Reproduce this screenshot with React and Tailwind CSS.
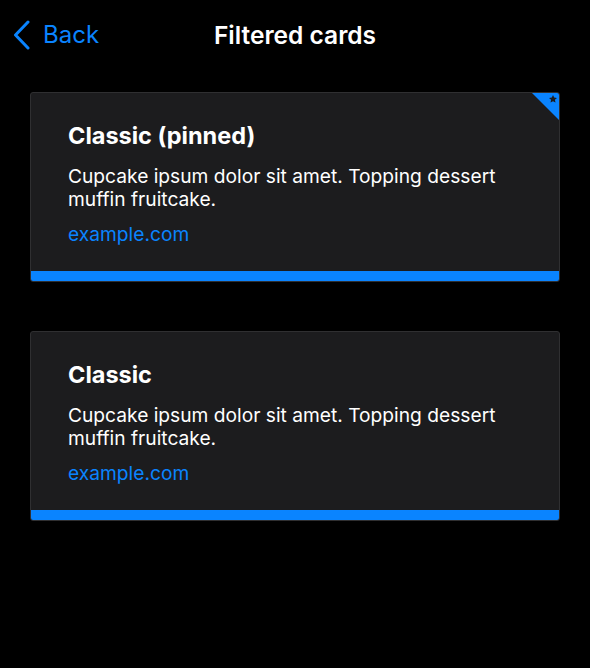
import React from 'react';

const cards = [
  { title: 'Classic (pinned)', pinned: true },
  { title: 'Classic', pinned: false },
];

const Card = ({ title, pinned }) => (
  <div className="relative flex h-[190px] flex-col overflow-hidden rounded-[3px] border border-[#2f2f31] bg-[#1c1c1e] shadow-[0_2px_8px_rgba(0,0,0,0.6)]">
    {pinned && (
      <div className="absolute right-0 top-0 h-[27px] w-[27px]">
        <svg viewBox="0 0 27 27" className="h-full w-full">
          <polygon points="0,0 27,0 27,27" fill="#0a84ff" />
          <polygon
            points="21,2 22.2,4.6 25,4.9 22.9,6.8 23.5,9.6 21,8.2 18.5,9.6 19.1,6.8 17,4.9 19.8,4.6"
            fill="#1c1c1e"
          />
        </svg>
      </div>
    )}
    <div className="flex-1 px-[37px] pt-[28px]">
      <h2 className="text-[23.5px] font-bold leading-[30px] text-white">{title}</h2>
      <p className="mt-[14px] text-[19.2px] leading-[22.5px] text-white">
        Cupcake ipsum dolor sit amet. Topping dessert muffin fruitcake.
      </p>
      <a className="mt-[13px] block text-[19.2px] leading-[23px] text-[#0a84ff]">example.com</a>
    </div>
    <div className="h-[10px] bg-[#0a84ff]" />
  </div>
);

export default function App() {
  return (
    <div className="min-h-[668px] bg-black font-['Inter',sans-serif]">
      <header className="relative flex h-[70px] items-center px-[12px]">
        <div className="flex items-center gap-[13px] text-[#0a84ff]">
          <svg width="18" height="30" viewBox="0 0 18 30" fill="none">
            <path d="M16 2 L3.5 15 L16 28" stroke="#0a84ff" strokeWidth="3" strokeLinecap="round" strokeLinejoin="round" />
          </svg>
          <span className="text-[24px] leading-none">Back</span>
        </div>
        <h1 className="absolute left-1/2 -translate-x-1/2 text-[24.5px] font-semibold text-white">Filtered cards</h1>
      </header>
      <main className="flex flex-col gap-[49px] px-[30px] pt-[22px]">
        {cards.map((c) => (
          <Card key={c.title} {...c} />
        ))}
      </main>
    </div>
  );
}
